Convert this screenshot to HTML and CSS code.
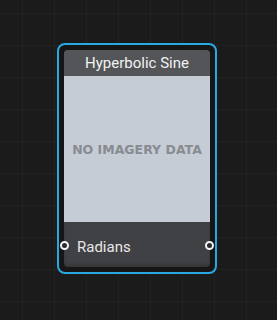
FILE: index.html
```html
<!DOCTYPE html>
<html lang="en">
<head>
  <meta charset="UTF-8" />
  <title>Hyperbolic Sine</title>
  <link rel="stylesheet" href="styles.css">
</head>
<body>
  <div class="canvas">
    <div class="node selected">
      <div class="card">
        <div class="title">Hyperbolic Sine</div>
        <div class="preview">NO IMAGERY DATA</div>
        <div class="ports">
          <span class="port port-in"></span>
          <span class="label">Radians</span>
          <span class="port port-out"></span>
        </div>
      </div>
    </div>
  </div>
</body>
</html>
```

FILE: styles.css
```css
body {
  margin: 0;
  background: #1b1b1b;
  font-family: Roboto, 'Liberation Sans', sans-serif;
}

.canvas {
  position: relative;
  width: 277px;
  height: 320px;
  overflow: hidden;
  background-color: #1b1b1b;
  background-image:
    linear-gradient(to right, rgba(255, 255, 255, 0.03) 1px, transparent 1px),
    linear-gradient(to bottom, rgba(255, 255, 255, 0.03) 1px, transparent 1px);
  background-size: 32px 32px;
  background-position: 22px 13px;
}

.node {
  position: absolute;
  left: 57px;
  top: 43px;
  width: 146px;
  padding: 5px;
  border: 2px solid #2aa9e1;
  border-radius: 8px;
  background: #161616;
}

.card {
  border-radius: 4px;
  background: #404144;
}

.title {
  height: 26px;
  line-height: 27px;
  border-radius: 4px 4px 0 0;
  background: #545558;
  color: #f2f2f2;
  font-size: 15px;
  text-align: center;
}

.preview {
  height: 146px;
  background: #c5ccd6;
  color: #888b90;
  font-family: 'DejaVu Sans', sans-serif;
  font-weight: bold;
  font-size: 12.5px;
  display: flex;
  align-items: center;
  justify-content: center;
}

.ports {
  position: relative;
  height: 45px;
  display: flex;
  align-items: center;
  padding: 0 13px;
  border-radius: 0 0 4px 4px;
  box-shadow: inset 0 -3px 3px rgba(0, 0, 0, 0.15);
}

.label {
  color: #e8e8e8;
  font-size: 15px;
  margin-top: 5px;
}

.port {
  position: absolute;
  top: 19px;
  width: 5px;
  height: 5px;
  border: 2px solid #f4f4f4;
  border-radius: 50%;
  background: #2a2a2a;
}

.port-in {
  left: -4px;
}

.port-out {
  right: -4px;
}
```
